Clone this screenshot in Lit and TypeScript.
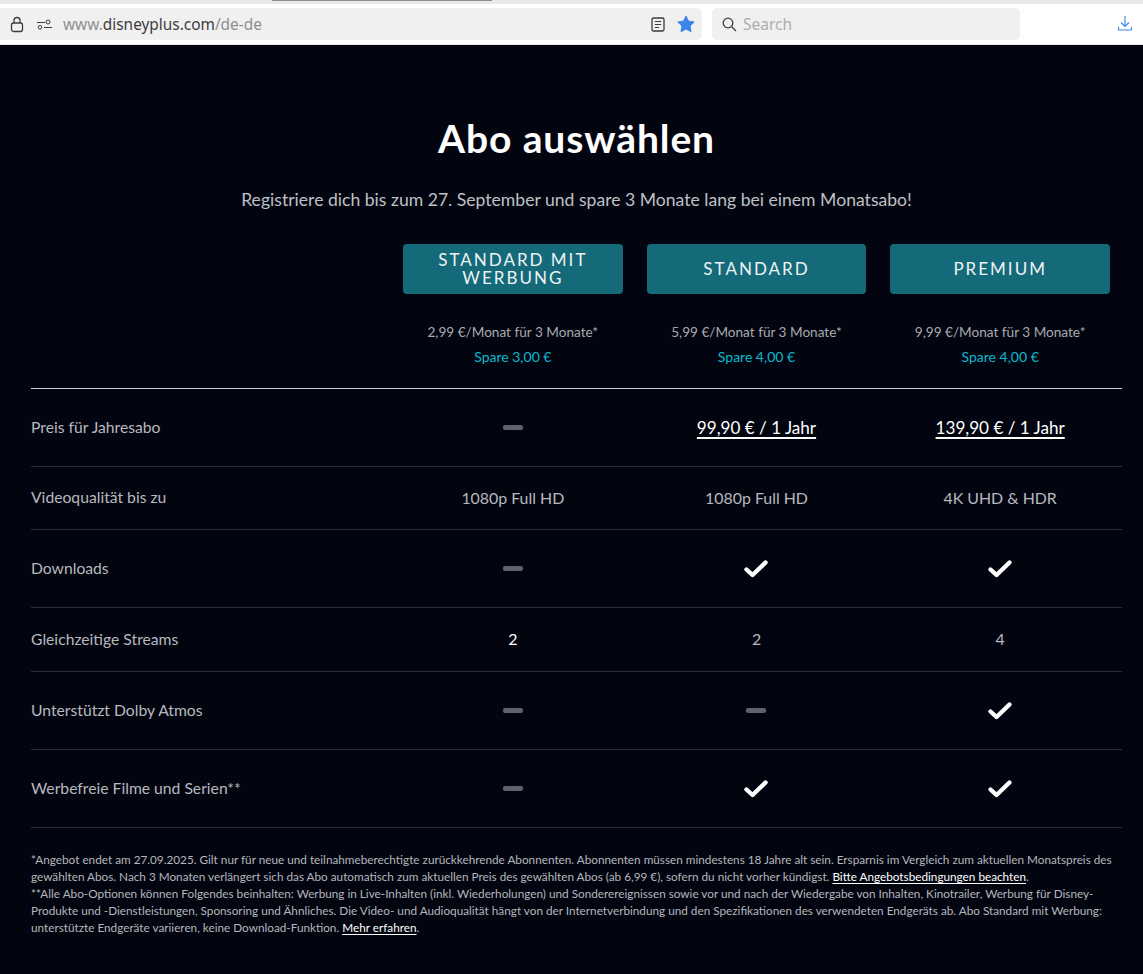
import { LitElement, html, css, svg } from "lit";
import { customElement } from "lit/decorators.js";

const dash = html`<span class="dash"></span>`;
const check = html`<svg class="check" width="26" height="20" viewBox="0 0 26 20"><path d="M3.5 10.5 L9.5 16 L22.5 3.5" fill="none" stroke="#fff" stroke-width="4.4" stroke-linejoin="round" stroke-linecap="round"/></svg>`;

@customElement("app-root")
export class AppRoot extends LitElement {
  static styles = css`
    :host { display: block; width: 1143px; height: 974px; overflow: hidden; background: #020510; font-family: "Lato", "Noto Sans", sans-serif; color: #c8c9cd; }
    .chrome { height: 45px; box-sizing: border-box; background: #fff; position: relative; display: flex; align-items: flex-start; padding-top: 8px; border-bottom: 1px solid #e6e6e8; }
    .topstrip { position: absolute; left: 0; right: 0; top: 0; height: 4px; background: #e9e9eb; }
    .tab { position: absolute; left: 272px; width: 220px; top: 0; height: 1px; background: #8f8f92; }
    .url { margin-left: 0; width: 702px; height: 32px; background: #f0f0f1; border-radius: 0 5px 5px 0; display: flex; align-items: center; box-sizing: border-box; padding-left: 10px; font: 15.4px "Noto Sans", sans-serif; color: #8f8f93; }
    .url b { font-weight: 400; color: #3c3c40; }
    .url .text { margin-left: 11px; }
    .url .gap { flex: 1; }
    .url svg { flex: none; }
    .search { margin-left: 10px; width: 308px; height: 32px; background: #f0f0f1; border-radius: 5px; display: flex; align-items: center; box-sizing: border-box; padding-left: 10px; gap: 6px; font: 15.5px "Noto Sans", sans-serif; color: #aeaeb0; }
    .dl { position: absolute; left: 1118px; top: 15px; }
    .main { padding: 0 21px 0 31px; }
    h1 { margin: 0; padding-top: 67px; text-align: center; font-size: 39px; line-height: 52px; font-weight: 700; color: #fff; letter-spacing: 0.9px; width: 1091px; }
    .sub { text-align: center; font-size: 17.6px; line-height: 26px; margin-top: 23px; color: #bfc0c5; width: 1091px; }
    .row { display: grid; grid-template-columns: 360px repeat(3, 1fr); align-items: center; border-bottom: 1px solid #2b2d36; }
    .row > div:not(.label) { text-align: center; display: flex; justify-content: center; align-items: center; }
    .label { font-size: 15.7px; color: #b8b9be; position: relative; top: -1px; }
    .val { font-size: 15.9px; color: #b8b9be; position: relative; top: -1px; }
    .white { color: #fff; }
    .heads { display: grid; grid-template-columns: 360px repeat(3, 1fr); margin-top: 31px; }
    .btn { margin: 0 12px; height: 50px; background: #156a79; border-radius: 4px; color: #eef3f5; display: flex; align-items: center; justify-content: center; text-align: center; font-size: 17px; line-height: 18px; letter-spacing: 2px; padding-bottom: 1px; box-sizing: border-box; }
    .prices { display: grid; grid-template-columns: 360px repeat(3, 1fr); padding-top: 28px; height: 66px; border-bottom: 1px solid #d0d0d2; }
    .price { text-align: center; font-size: 13.6px; line-height: 20px; color: #a9aab0; }
    .save { color: #0bb9cf; margin-top: 5px; font-size: 14px; }
    .price-year { font-size: 17.1px; color: #fff; }
    .price-year u { text-decoration-thickness: 1.5px; text-underline-offset: 3px; }
    .dash { display: block; width: 20px; height: 5px; border-radius: 2px; background: #5f616b; }
    .check { display: block; }
    .r1 { height: 77px; } .r2 { height: 62px; } .r3 { height: 77px; } .r4 { height: 63px; } .r5 { height: 77px; } .r6 { height: 77px; }
    .notes { margin-top: 23px; font-size: 11.75px; line-height: 17px; color: #b6b7bc; width: 1091px; padding-right: 8px; box-sizing: border-box; }
    .notes a { color: #fff; text-decoration: underline; text-underline-offset: 2px; }
  `;

  render() {
    const star = svg`<path d="M9 1 L11.5 6.2 L17.2 7 L13.1 11 L14 16.7 L9 14 L4 16.7 L4.9 11 L.8 7 L6.5 6.2 Z" fill="#3b84e8" stroke="#3b84e8" stroke-linejoin="round"/>`;
    return html`
      <div class="chrome">
        <div class="topstrip"></div>
        <div class="tab"></div>
        <div class="url">
          <svg width="14" height="17" viewBox="0 0 14 17"><rect x="1.5" y="7" width="11" height="8.5" rx="2" fill="none" stroke="#3c3c40" stroke-width="1.3"/><path d="M4 7V4.5a3 3 0 0 1 6 0V7" fill="none" stroke="#3c3c40" stroke-width="1.3"/></svg>
          <svg style="margin-left:13px" width="15" height="11" viewBox="0 0 15 11"><path d="M0 3.5H8M7 8.5H15" stroke="#3c3c40" stroke-width="1" fill="none"/><circle cx="11" cy="3" r="2" fill="none" stroke="#3c3c40"/><circle cx="3" cy="8.3" r="1.8" fill="none" stroke="#3c3c40"/></svg>
          <span class="text">www.<b>disneyplus.com</b>/de-de</span>
          <span class="gap"></span>
          <svg width="14" height="15" viewBox="0 0 14 15"><rect x="1" y="1" width="12" height="13" rx="1.5" fill="none" stroke="#3c3c40" stroke-width="1.3"/><path d="M3.8 4.5H10.2M3.8 7.5H10.2M3.8 10.5H8" stroke="#3c3c40" stroke-width="1.2"/></svg>
          <svg style="margin:0 7px 0 12px" width="18" height="18" viewBox="0 0 18 18">${star}</svg>
        </div>
        <div class="search">
          <svg width="15" height="15" viewBox="0 0 15 15"><circle cx="6" cy="6" r="4.8" fill="none" stroke="#3c3c40" stroke-width="1.3"/><path d="M9.5 9.5 L14 14" stroke="#3c3c40" stroke-width="1.3"/></svg>
          <span>Search</span>
        </div>
        <svg class="dl" width="14" height="16" viewBox="0 0 14 16"><path d="M7 1V11M3 7.5 L7 11.5 L11 7.5M.5 12V15H13.5V12" fill="none" stroke="#3b84e8" stroke-width="1.1"/></svg>
      </div>
      <div class="main">
        <h1>Abo auswählen</h1>
        <div class="sub">Registriere dich bis zum 27. September und spare 3 Monate lang bei einem Monatsabo!</div>
        <div class="heads">
          <div></div>
          <div class="btn">STANDARD MIT WERBUNG</div>
          <div class="btn">STANDARD</div>
          <div class="btn">PREMIUM</div>
        </div>
        <div class="prices">
          <div></div>
          <div class="price">2,99 €/Monat für 3 Monate*<div class="save">Spare 3,00 €</div></div>
          <div class="price">5,99 €/Monat für 3 Monate*<div class="save">Spare 4,00 €</div></div>
          <div class="price">9,99 €/Monat für 3 Monate*<div class="save">Spare 4,00 €</div></div>
        </div>
        <div class="row r1"><div class="label">Preis für Jahresabo</div><div>${dash}</div><div class="price-year"><u>99,90 € / 1 Jahr</u></div><div class="price-year"><u>139,90 € / 1 Jahr</u></div></div>
        <div class="row r2"><div class="label">Videoqualität bis zu</div><div class="val">1080p Full HD</div><div class="val">1080p Full HD</div><div class="val">4K UHD &amp; HDR</div></div>
        <div class="row r3"><div class="label">Downloads</div><div>${dash}</div><div>${check}</div><div>${check}</div></div>
        <div class="row r4"><div class="label">Gleichzeitige Streams</div><div class="val white">2</div><div class="val">2</div><div class="val">4</div></div>
        <div class="row r5"><div class="label">Unterstützt Dolby Atmos</div><div>${dash}</div><div>${dash}</div><div>${check}</div></div>
        <div class="row r6"><div class="label">Werbefreie Filme und Serien**</div><div>${dash}</div><div>${check}</div><div>${check}</div></div>
        <div class="notes">*Angebot endet am 27.09.2025. Gilt nur für neue und teilnahmeberechtigte zurückkehrende Abonnenten. Abonnenten müssen mindestens 18 Jahre alt sein. Ersparnis im Vergleich zum aktuellen Monatspreis des gewählten Abos. Nach 3 Monaten verlängert sich das Abo automatisch zum aktuellen Preis des gewählten Abos (ab 6,99 €), sofern du nicht vorher kündigst. <a>Bitte Angebotsbedingungen beachten</a>.<br>**Alle Abo-Optionen können Folgendes beinhalten: Werbung in Live-Inhalten (inkl. Wiederholungen) und Sonderereignissen sowie vor und nach der Wiedergabe von Inhalten, Kinotrailer, Werbung für Disney-Produkte und -Dienstleistungen, Sponsoring und Ähnliches. Die Video- und Audioqualität hängt von der Internetverbindung und den Spezifikationen des verwendeten Endgeräts ab. Abo Standard mit Werbung: unterstützte Endgeräte variieren, keine Download-Funktion. <a>Mehr erfahren</a>.</div>
      </div>
    `;
  }
}
